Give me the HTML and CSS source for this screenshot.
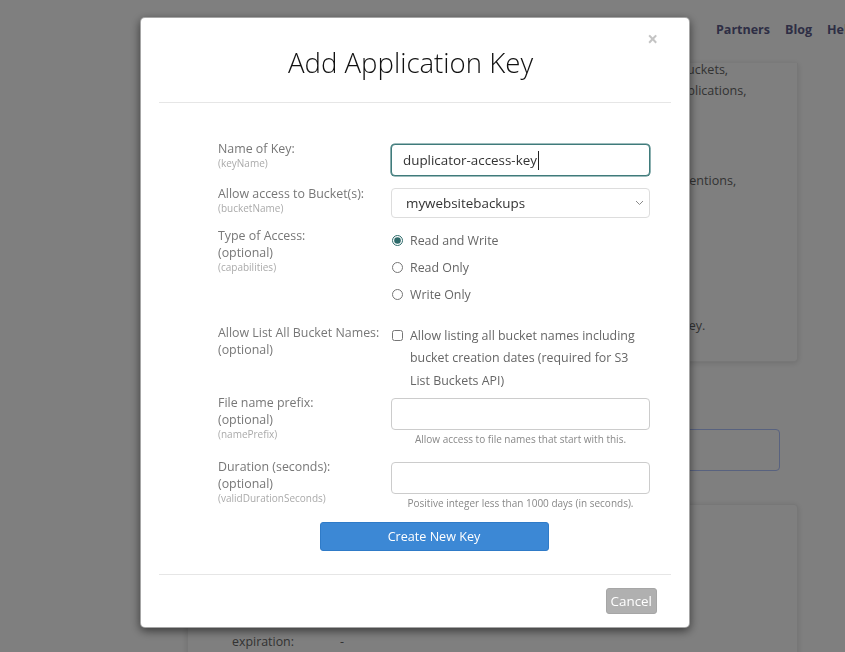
FILE: index.html
```html
<!DOCTYPE html>
<html lang="en">
<head>
<meta charset="utf-8">
<title>Add Application Key</title>
<link rel="stylesheet" href="styles.css">
</head>
<body>
<div class="page">
  <header class="topbar">
    <a href="#">Partners</a>
    <a href="#">Blog</a>
    <a href="#">Help</a>
  </header>
  <main class="content">
    <section class="card card-intro">
      <p class="intro-text">You can use Application Keys to allow access to specific functions on specific buckets,<br>so that you don't need to share your Master Application Key with any other applications,<br>services or people that need limited access.</p>
      <p class="intro-text">Keys can be limited to one bucket, to files with a name prefix,<br>a duration after which they'll expire, and can follow your local file naming conventions,<br>which helps keep your keys organized.</p>
      <p class="intro-text intro-note">When you create a key, the Application Key is shown once.<br>Copy it into your application right away.<br>You will not be able to retrieve it later.<br>Be sure to save it somewhere, since this is the only time that you can see the key.</p>
    </section>
    <section class="filter">
      <div class="filter-box"></div>
    </section>
    <section class="card card-keys">
      <div class="kv"><span class="kv-key">expiration:</span><span>-</span></div>
    </section>
  </main>
</div>

<div class="backdrop"></div>

<div class="modal-layer">
  <div class="modal">
    <div class="modal-header">
      <button class="close" type="button">&times;</button>
      <h2 class="modal-title">Add Application Key</h2>
    </div>
    <div class="modal-body">
      <form class="key-form">
        <div class="field field-first">
          <div class="field-label">Name of Key:<small class="hint">(keyName)</small></div>
          <div class="control">
            <input class="text-input is-focused" type="text" value="duplicator-access-key">
            <span class="caret"></span>
          </div>
        </div>
        <div class="field field-second">
          <div class="field-label">Allow access to Bucket(s):<small class="hint">(bucketName)</small></div>
          <div class="control">
            <select class="select"><option>mywebsitebackups</option></select>
            <svg class="chevron" width="9" height="6" viewBox="0 0 9 6"><path d="M1 1l3.5 3.5L8 1" fill="none" stroke="#8a8a8a" stroke-width="1"/></svg>
          </div>
        </div>
        <div class="field">
          <div class="field-label">Type of Access:<span class="opt">(optional)</span><small class="hint">(capabilities)</small></div>
          <div class="choice-list">
            <label class="choice"><input type="radio" name="cap" checked>Read and Write</label>
            <label class="choice"><input type="radio" name="cap">Read Only</label>
            <label class="choice"><input type="radio" name="cap">Write Only</label>
          </div>
        </div>
        <div class="field field-check">
          <div class="field-label">Allow List All Bucket Names:<span class="opt">(optional)</span></div>
          <label class="check"><input type="checkbox"><span>Allow listing all bucket names including bucket creation dates (required for S3 List Buckets API)</span></label>
        </div>
        <div class="field">
          <div class="field-label">File name prefix:<span class="opt">(optional)</span><small class="hint">(namePrefix)</small></div>
          <div class="control">
            <input class="text-input" type="text">
            <p class="help">Allow access to file names that start with this.</p>
          </div>
        </div>
        <div class="field">
          <div class="field-label">Duration (seconds):<span class="opt">(optional)</span><small class="hint">(validDurationSeconds)</small></div>
          <div class="control">
            <input class="text-input" type="text">
            <p class="help">Positive integer less than 1000 days (in seconds).</p>
          </div>
        </div>
        <button class="btn-primary" type="button">Create New Key</button>
      </form>
    </div>
    <div class="modal-footer">
      <button class="btn-cancel" type="button">Cancel</button>
    </div>
  </div>
</div>
</body>
</html>
```

FILE: styles.css
```css
* { box-sizing: border-box; }

html, body {
  margin: 0;
  height: 100%;
}

body {
  font-family: "Open Sans", "Liberation Sans", sans-serif;
  background: #fff;
  color: #666;
  overflow: hidden;
}

/* ---------- background page ---------- */
.page {
  width: 845px;
}

.topbar {
  height: 63px;
  display: flex;
  align-items: center;
  gap: 15px;
  padding: 0 0 5px 716px;
  white-space: nowrap;
  overflow: hidden;
  font-size: 12.5px;
  font-weight: 700;
}

.topbar a {
  color: #5c5c8a;
  text-decoration: none;
}

.content {
  margin-left: 187px;
  width: 611px;
}

.card {
  background: #fff;
  border: 1px solid #eee;
  border-radius: 4px;
  box-shadow: 0 1px 6px rgba(0, 0, 0, 0.14);
}

.card-intro {
  border-top: 0;
  border-radius: 0 0 4px 4px;
  height: 299px;
  padding: 0 20px 0 44px;
  overflow: hidden;
}

.intro-text {
  margin: 27px 0 0;
  font-size: 12.55px;
  line-height: 21px;
  white-space: nowrap;
  color: #666;
}

.intro-text:first-child {
  margin-top: -4px;
}

.intro-note {
  margin-top: 40px;
}

.filter {
  padding: 67px 18px 33px 18px;
}

.filter-box {
  height: 42px;
  border: 1px solid #b0c4ff;
  border-radius: 4px;
  background: #fff;
}

.card-keys {
  height: 200px;
  padding: 126px 0 0 44px;
}

.kv {
  display: flex;
  font-size: 12.4px;
  line-height: 21px;
  color: #666;
}

.kv-key {
  width: 108px;
}

/* ---------- modal ---------- */
.backdrop {
  position: fixed;
  inset: 0;
  background: rgba(0, 0, 0, 0.5);
}

.modal-layer {
  position: fixed;
  inset: 0;
  padding: 17px 0 0 140px;
}

.modal {
  width: 550px;
  background: #fff;
  border: 1px solid rgba(0, 0, 0, 0.35);
  border-radius: 5px;
  box-shadow: 0 3px 10px rgba(0, 0, 0, 0.55);
}

.modal-header {
  position: relative;
  margin: 0 18px;
  padding: 29px 9px 25px 0;
  border-bottom: 1px solid #e6e6e6;
  text-align: center;
}

.modal-title {
  margin: 0;
  font-size: 27.6px;
  font-weight: 300;
  line-height: 30px;
  color: #111;
}

.close {
  position: absolute;
  top: 11px;
  right: 13px;
  padding: 0;
  border: 0;
  background: none;
  font-family: "Open Sans", "Liberation Sans", sans-serif;
  font-size: 19px;
  font-weight: 700;
  line-height: 20px;
  color: #c4c4c4;
}

.modal-body {
  padding: 37px 39px 23px 77px;
}

.field {
  display: grid;
  grid-template-columns: 173px 259px;
  margin-bottom: 8px;
}

.field-first,
.field-second {
  margin-bottom: 9px;
}

.field-check {
  margin-bottom: 2px;
}

.field-label {
  font-size: 12.4px;
  line-height: 17px;
  color: #777;
}

.opt {
  display: block;
}

.hint {
  display: block;
  font-size: 10px;
  line-height: 13px;
  color: #aaa;
}

.control {
  position: relative;
}

.text-input {
  display: block;
  width: 100%;
  height: 32px;
  margin: 4px 0 0;
  padding: 0 11px;
  border: 1px solid #ccc;
  border-radius: 4px;
  font-family: inherit;
  font-size: 13.4px;
  color: #333;
  background: #fff;
  outline: none;
}

.text-input.is-focused {
  border-color: #3f7b7b;
  box-shadow: 0 0 0 0.6px #3f7b7b;
}

.caret {
  position: absolute;
  left: 147px;
  top: 11px;
  width: 1px;
  height: 19px;
  background: #222;
}

.select {
  display: block;
  width: 100%;
  height: 30px;
  margin-top: 3px;
  padding: 0 0 0 14px;
  border: 1px solid #ddd;
  border-radius: 4px;
  background: #fff;
  font-family: inherit;
  font-size: 13.4px;
  color: #333;
  appearance: none;
  -webkit-appearance: none;
}

.chevron {
  position: absolute;
  right: 6px;
  top: 15px;
}

.choice-list {
  padding-bottom: 8px;
}

.choice {
  display: flex;
  align-items: center;
  gap: 7px;
  height: 27px;
  font-size: 12.4px;
  color: #666;
}

.choice input {
  width: 11px;
  height: 11px;
  margin: 0 0 0 1px;
  accent-color: #2e6a6a;
}

.check {
  display: flex;
  align-items: flex-start;
  gap: 7px;
  padding-top: 0.5px;
  font-size: 12.4px;
  line-height: 22.5px;
  color: #666;
}

.check input {
  flex: none;
  width: 11px;
  height: 11px;
  margin: 5px 0 0 1px;
}

.help {
  margin: 3px 0 5px;
  font-size: 10px;
  line-height: 12px;
  color: #888;
  text-align: center;
}

.btn-primary {
  display: block;
  width: 229px;
  height: 29px;
  margin: 0 auto;
  border: 1px solid #2f7bc8;
  border-radius: 3px;
  background: #3c88d5;
  font-family: inherit;
  font-size: 12.6px;
  color: #fff;
}

.modal-footer {
  display: flex;
  justify-content: flex-end;
  margin: 0 18px;
  padding: 13px 14px;
  border-top: 1px solid #e6e6e6;
}

.btn-cancel {
  height: 26px;
  padding: 0 4px;
  border: 1px solid #a6a6a6;
  border-radius: 3px;
  background: #b0b0b0;
  font-family: inherit;
  font-size: 13.4px;
  color: #fff;
}
```
